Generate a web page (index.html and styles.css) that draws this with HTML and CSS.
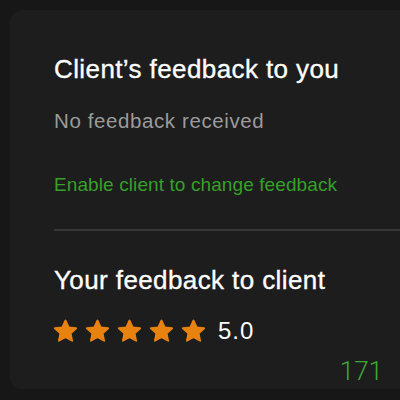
FILE: index.html
```html
<!DOCTYPE html>
<html lang="en">
<head>
  <meta charset="UTF-8" />
  <meta name="viewport" content="width=device-width, initial-scale=1.0"/>
  <title>Feedback</title>
  <link rel="stylesheet" href="styles.css">
</head>
<body>
  <!-- feedback card -->
  <div class="card">
    <h2 class="card-title">Client’s feedback to you</h2>
    <p class="empty">No feedback received</p>
    <a href="#" class="enable-link">Enable client to change feedback</a>

    <hr class="divider">

    <h2 class="card-title">Your feedback to client</h2>
    <div class="rating">
      <svg class="star" viewBox="0 0 24 24"><path d="M12 2.2l2.9 6.1 6.6.8-4.9 4.6 1.3 6.6L12 17l-5.9 3.3 1.3-6.6-4.9-4.6 6.6-.8z"/></svg>
      <svg class="star" viewBox="0 0 24 24"><path d="M12 2.2l2.9 6.1 6.6.8-4.9 4.6 1.3 6.6L12 17l-5.9 3.3 1.3-6.6-4.9-4.6 6.6-.8z"/></svg>
      <svg class="star" viewBox="0 0 24 24"><path d="M12 2.2l2.9 6.1 6.6.8-4.9 4.6 1.3 6.6L12 17l-5.9 3.3 1.3-6.6-4.9-4.6 6.6-.8z"/></svg>
      <svg class="star" viewBox="0 0 24 24"><path d="M12 2.2l2.9 6.1 6.6.8-4.9 4.6 1.3 6.6L12 17l-5.9 3.3 1.3-6.6-4.9-4.6 6.6-.8z"/></svg>
      <svg class="star" viewBox="0 0 24 24"><path d="M12 2.2l2.9 6.1 6.6.8-4.9 4.6 1.3 6.6L12 17l-5.9 3.3 1.3-6.6-4.9-4.6 6.6-.8z"/></svg>
      <span class="score">5.0</span>
    </div>
    <div class="count">171</div>
  </div>
</body>
</html>
```

FILE: styles.css
```css
body {
  font-family: "Liberation Sans", Arial, sans-serif;
  background-color: #171717;
  margin: 0;
  padding: 10px 0 0 10px;
  overflow: hidden;
}

.card {
  background-color: #1d1d1d;
  border-radius: 12px 0 0 12px;
  height: 379px;
  box-sizing: border-box;
  padding: 44px 0 0 44px;
  display: flex;
  flex-direction: column;
}

.card-title {
  margin: 0;
  font-size: 26px;
  font-weight: normal;
  color: #ffffff;
  line-height: 30px;
  letter-spacing: 0.4px;
  -webkit-text-stroke: 0.35px #ffffff;
}

.empty {
  margin: 24px 0 0;
  font-size: 20.5px;
  color: #9b9b9b;
  line-height: 26px;
  letter-spacing: 0.6px;
}

.enable-link {
  margin-top: 40px;
  font-size: 19px;
  color: #36a02a;
  text-decoration: none;
  line-height: 22px;
  letter-spacing: 0.1px;
}

.divider {
  border: none;
  border-top: 2px solid #373737;
  margin: 33px 0 34px;
  width: 100%;
}

.rating {
  display: flex;
  align-items: center;
  gap: 5px;
  margin-top: 21px;
  height: 30px;
  margin-left: -2px;
}

.star {
  width: 27px;
  height: 27px;
  fill: #e8820f;
  stroke: #e8820f;
  stroke-width: 1.6;
  stroke-linejoin: round;
}

.score {
  margin-left: 6px;
  font-size: 24px;
  letter-spacing: 1px;
  color: #ffffff;
}

.count {
  align-self: flex-end;
  margin: 10px 17px 0 0;
  font-family: Roboto, sans-serif;
  font-size: 26px;
  font-weight: 300;
  color: #3fa535;
}
```
